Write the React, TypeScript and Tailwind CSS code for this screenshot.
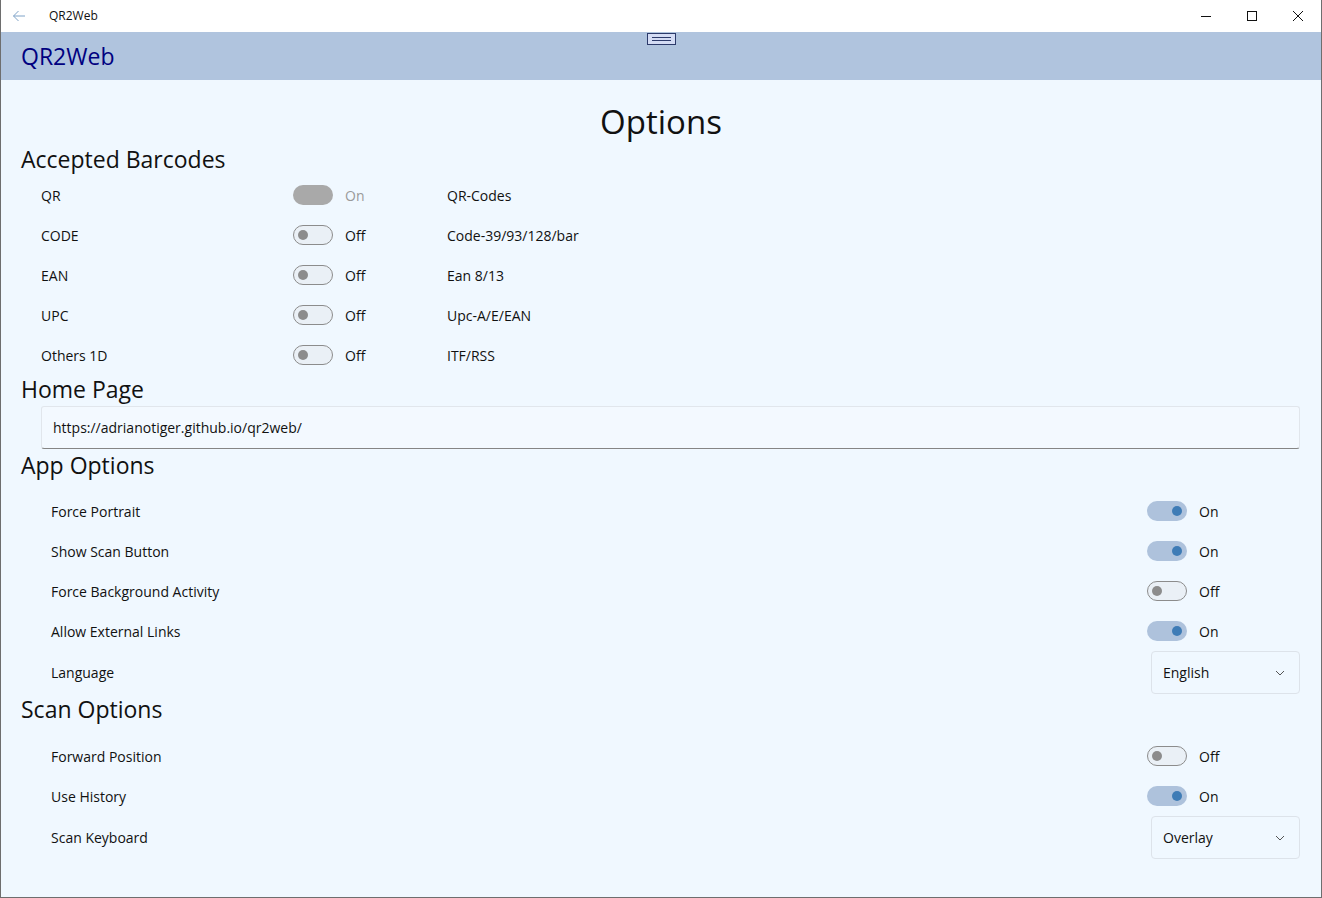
import React from "react"

const font = { fontFamily: '"Open Sans", "Noto Sans", sans-serif' }

const Toggle = ({ on, disabled }: { on: boolean; disabled?: boolean }) => {
  if (disabled) {
    return <div className="w-10 h-5 rounded-full bg-[#a9a9a9]" />
  }
  if (on) {
    return (
      <div className="w-10 h-5 rounded-full bg-[#aec2dc] flex items-center justify-end pr-[5px]">
        <div className="w-[10px] h-[10px] rounded-full bg-[#3f7cb6]" />
      </div>
    )
  }
  return (
    <div className="w-10 h-5 rounded-full border border-[#8c8c8c] bg-[#eaf0f6] flex items-center pl-[4px]">
      <div className="w-[10px] h-[10px] rounded-full bg-[#8c8c8c]" />
    </div>
  )
}

const BarcodeRow = ({
  label,
  on,
  disabled,
  desc,
}: {
  label: string
  on: boolean
  disabled?: boolean
  desc: string
}) => (
  <div className="h-10 flex items-center text-[14px]">
    <div className="w-[292px] pl-[40px] shrink-0">{label}</div>
    <Toggle on={on} disabled={disabled} />
    <div className={`w-[114px] pl-3 ${disabled ? "text-[#9a9a9a]" : ""}`}>{on ? "On" : "Off"}</div>
    <div>{desc}</div>
  </div>
)

const OptionRow = ({ label, on }: { label: string; on: boolean }) => (
  <div className="h-10 flex items-center text-[14px]">
    <div className="flex-1 pl-[50px]">{label}</div>
    <Toggle on={on} />
    <div className="w-[134px] pl-3">{on ? "On" : "Off"}</div>
  </div>
)

const ComboRow = ({ label, value }: { label: string; value: string }) => (
  <div className="h-[43px] flex items-center text-[14px]">
    <div className="flex-1 pl-[50px]">{label}</div>
    <div className="w-[149px] h-[43px] mr-[21px] border border-[#dde3ea] rounded-[4px] flex items-center justify-between pl-[11px] pr-[14px]">
      <span>{value}</span>
      <svg width="10" height="6" viewBox="0 0 10 6" fill="none">
        <path d="M1 1 L5 5 L9 1" stroke="#555" strokeWidth="1" />
      </svg>
    </div>
  </div>
)

const Heading = ({ children }: { children: React.ReactNode }) => (
  <div className="h-[30px] flex items-center pl-[20px] text-[23px]">{children}</div>
)

export default function App() {
  return (
    <div
      style={font}
      className="w-[1322px] h-[898px] flex flex-col bg-[#f0f8ff] text-[#111] border-x border-b border-[#6e6e6e] overflow-hidden"
    >
      {/* title bar */}
      <div className="h-8 bg-white flex items-center text-[12px] shrink-0">
        <div className="w-[48px] flex justify-center pr-[12px]">
          <svg width="14" height="12" viewBox="0 0 14 12" fill="none">
            <path d="M13 6 H1.5 M6.5 1 L1.5 6 L6.5 11" stroke="#7fa3c8" strokeWidth="1" />
          </svg>
        </div>
        <div>QR2Web</div>
        <div className="flex-1" />
        <div className="w-[46px] flex justify-center">
          <svg width="12" height="12" viewBox="0 0 12 12">
            <path d="M1 6.5 H11" stroke="#111" strokeWidth="1" />
          </svg>
        </div>
        <div className="w-[46px] flex justify-center">
          <svg width="12" height="12" viewBox="0 0 12 12" fill="none">
            <rect x="1.5" y="1.5" width="9" height="9" stroke="#111" strokeWidth="1" />
          </svg>
        </div>
        <div className="w-[46px] flex justify-center">
          <svg width="12" height="12" viewBox="0 0 12 12" fill="none">
            <path d="M1 1 L11 11 M11 1 L1 11" stroke="#111" strokeWidth="1" />
          </svg>
        </div>
      </div>

      {/* header */}
      <div className="h-12 bg-[#b0c4de] relative flex items-center pl-[20px] shrink-0">
        <div className="text-[23px] text-[#000080]">QR2Web</div>
        <div className="absolute left-[646px] top-[1px] w-[29px] h-[12px] bg-[#d4dcf4] border border-[#2c3a6a] flex flex-col justify-center items-center gap-[2px]">
          <div className="w-[19px] h-px bg-[#2c3a6a]" />
          <div className="w-[19px] h-px bg-[#2c3a6a]" />
        </div>
      </div>

      {/* content */}
      <div className="flex flex-col">
        <div className="h-[44px] mt-5 flex items-center justify-center text-[33px]">Options</div>
        <Heading>Accepted Barcodes</Heading>
        <div className="mt-px">
          <BarcodeRow label="QR" on disabled desc="QR-Codes" />
          <BarcodeRow label="CODE" on={false} desc="Code-39/93/128/bar" />
          <BarcodeRow label="EAN" on={false} desc="Ean 8/13" />
          <BarcodeRow label="UPC" on={false} desc="Upc-A/E/EAN" />
          <BarcodeRow label="Others 1D" on={false} desc="ITF/RSS" />
        </div>
        <div className="-mt-px">
          <Heading>Home Page</Heading>
        </div>
        <div className="ml-[40px] mr-[21px] mt-[2px] h-[43px] border border-[#e1e6ec] border-b-[#858585] rounded-[3px] flex items-center pl-[11px] text-[14px] bg-[#f3f9ff]">
          https://adrianotiger.github.io/qr2web/
        </div>
        <div className="mt-px">
          <Heading>App Options</Heading>
        </div>
        <div className="mt-[11px]">
          <OptionRow label="Force Portrait" on />
          <OptionRow label="Show Scan Button" on />
          <OptionRow label="Force Background Activity" on={false} />
          <OptionRow label="Allow External Links" on />
          <ComboRow label="Language" value="English" />
        </div>
        <Heading>Scan Options</Heading>
        <div className="mt-[12px]">
          <OptionRow label="Forward Position" on={false} />
          <OptionRow label="Use History" on />
          <ComboRow label="Scan Keyboard" value="Overlay" />
        </div>
      </div>
    </div>
  )
}
